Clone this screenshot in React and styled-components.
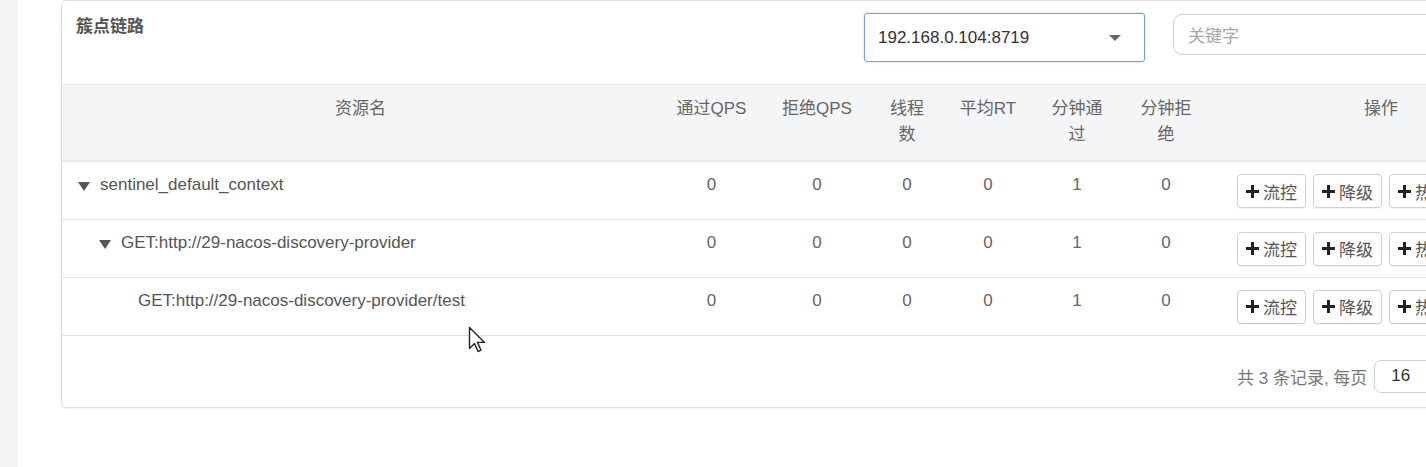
import React from "react";
import styled, { createGlobalStyle } from "styled-components";

const GlobalStyle = createGlobalStyle`
  html, body {
    margin: 0;
    padding: 0;
    background: #ffffff;
    overflow: hidden;
  }
  body {
    font-family: "Liberation Sans", "Noto Sans CJK SC", sans-serif;
    font-size: 17px;
    color: #555;
  }
`;

const Page = styled.div`
  display: flex;
  width: 1426px;
  height: 467px;
  overflow: hidden;
  position: relative;
`;

const Sidebar = styled.div`
  flex: 0 0 18px;
  background: #f5f5f6;
`;

const Main = styled.div`
  flex: 1;
  padding-left: 43px;
  min-width: 0;
`;

const Card = styled.div`
  width: 1492px;
  border: 1px solid #dcdcdc;
  border-radius: 5px;
  background: #fff;
  box-shadow: 0 1px 1px rgba(0, 0, 0, 0.04);
`;

const CardHeader = styled.div`
  height: 83px;
  display: flex;
  align-items: flex-start;
  box-sizing: border-box;
`;

const Title = styled.h3`
  flex: 0 0 802px;
  margin: 0;
  padding: 13px 0 0 14px;
  box-sizing: border-box;
  font-size: 17px;
  line-height: 26px;
  font-weight: bold;
  color: #555;
`;

const Select = styled.div`
  flex: 0 0 281px;
  height: 49px;
  margin-top: 12px;
  box-sizing: border-box;
  border: 1px solid #7d9fc6;
  border-radius: 3px;
  display: flex;
  align-items: center;
  justify-content: space-between;
  padding: 0 23px 0 13px;
  color: #333;
  font-size: 17px;
  box-shadow: 0 0 3px rgba(102, 140, 190, 0.35);
`;

const Caret = styled.span`
  width: 0;
  height: 0;
  border-left: 6px solid transparent;
  border-right: 6px solid transparent;
  border-top: 6px solid #666;
`;

const SearchInput = styled.div`
  flex: 0 0 320px;
  height: 41px;
  margin: 13px 0 0 28px;
  box-sizing: border-box;
  border: 1px solid #cfcfcf;
  border-radius: 9px;
  display: flex;
  align-items: center;
  padding-left: 14px;
  color: #a6a6a6;
  font-size: 17px;
`;

const Table = styled.table`
  table-layout: fixed;
  border-collapse: collapse;
  width: 1490px;
`;

const HeadCell = styled.th`
  background: #f4f5f7;
  border-top: 1px solid #e8e8e8;
  border-bottom: 2px solid #e6e6e6;
  height: 75px;
  box-sizing: border-box;
  padding: 11px 6px 12px;
  vertical-align: top;
  text-align: center;
  font-weight: normal;
  font-size: 17px;
  line-height: 26px;
  color: #666;
`;

const Row = styled.tr`
  height: 58px;
  border-bottom: 1px solid #e2e2e2;
`;

const Cell = styled.td`
  padding: 10px 6px 0;
  vertical-align: top;
  text-align: ${(p) => (p.$left ? "left" : "center")};
  font-size: 17px;
  line-height: 26px;
  color: ${(p) => (p.$left ? "#555" : "#666")};
  white-space: nowrap;
`;

const NameWrap = styled.div`
  display: flex;
  align-items: center;
  padding-left: ${(p) => 10 + p.$depth * 21}px;
`;

const Toggle = styled.span`
  width: 0;
  height: 0;
  border-left: 6px solid transparent;
  border-right: 6px solid transparent;
  border-top: 9px solid #555;
  margin: 3px 10px 0 0;
`;

const LeafSpacer = styled.span`
  flex: 0 0 18px;
`;

const OpCell = styled.td`
  padding: 12px 0 0 27px;
  vertical-align: top;
  white-space: nowrap;
`;

const OpButton = styled.button`
  height: 34px;
  box-sizing: border-box;
  margin-right: 7px;
  padding: 0 8px 0 8px;
  border: 1px solid #cfcfcf;
  border-radius: 4px;
  background: #fff;
  display: inline-flex;
  align-items: center;
  gap: 4px;
  font-family: inherit;
  font-size: 17px;
  color: #555;
  box-shadow: 0 1px 1px rgba(0, 0, 0, 0.05);
`;

const Pager = styled.div`
  display: flex;
  align-items: center;
  padding: 24px 0 14px 1175px;
  color: #777;
  font-size: 17px;
`;

const PageSize = styled.div`
  width: 90px;
  height: 33px;
  box-sizing: border-box;
  margin-left: 7px;
  border: 1px solid #cfcfcf;
  border-radius: 7px;
  display: flex;
  align-items: center;
  padding-left: 16px;
  color: #333;
  font-size: 17px;
`;

const Cursor = styled.svg`
  position: absolute;
  left: 468px;
  top: 326px;
`;

const Plus = () => (
  <svg width="13" height="13" viewBox="0 0 13 13">
    <path d="M5 0h3v5h5v3H8v5H5V8H0V5h5z" fill="#222" />
  </svg>
);

const rows = [
  { name: "sentinel_default_context", depth: 0, open: true },
  { name: "GET:http://29-nacos-discovery-provider", depth: 1, open: true },
  { name: "GET:http://29-nacos-discovery-provider/test", depth: 2, open: false },
];

const cols = [597, 105, 106, 74, 88, 90, 88, 342];

export default function App() {
  return (
    <>
      <GlobalStyle />
      <Page>
        <Sidebar />
        <Main>
          <Card>
            <CardHeader>
              <Title>簇点链路</Title>
              <Select>
                <span>192.168.0.104:8719</span>
                <Caret />
              </Select>
              <SearchInput>关键字</SearchInput>
            </CardHeader>
            <Table>
              <colgroup>
                {cols.map((w, i) => (
                  <col key={i} style={{ width: w }} />
                ))}
              </colgroup>
              <thead>
                <tr>
                  <HeadCell>资源名</HeadCell>
                  <HeadCell>通过QPS</HeadCell>
                  <HeadCell>拒绝QPS</HeadCell>
                  <HeadCell>线程<br />数</HeadCell>
                  <HeadCell>平均RT</HeadCell>
                  <HeadCell>分钟通<br />过</HeadCell>
                  <HeadCell>分钟拒<br />绝</HeadCell>
                  <HeadCell>操作</HeadCell>
                </tr>
              </thead>
              <tbody>
                {rows.map((r, i) => (
                  <Row key={i}>
                    <Cell $left>
                      <NameWrap $depth={r.depth}>
                        {r.open ? <Toggle /> : <LeafSpacer />}
                        {r.name}
                      </NameWrap>
                    </Cell>
                    <Cell>0</Cell>
                    <Cell>0</Cell>
                    <Cell>0</Cell>
                    <Cell>0</Cell>
                    <Cell>1</Cell>
                    <Cell>0</Cell>
                    <OpCell>
                      <OpButton><Plus />流控</OpButton>
                      <OpButton><Plus />降级</OpButton>
                      <OpButton><Plus />热点</OpButton>
                    </OpCell>
                  </Row>
                ))}
              </tbody>
            </Table>
            <Pager>
              共 3 条记录, 每页
              <PageSize>16</PageSize>
            </Pager>
          </Card>
        </Main>
        <Cursor width="20" height="28" viewBox="0 0 20 28">
          <path d="M1.5 1.5v21l5-5 3.5 8 3-1.3-3.5-7.8h7z" fill="#fff" stroke="#222" strokeWidth="1.4" strokeLinejoin="round" />
        </Cursor>
      </Page>
    </>
  );
}
